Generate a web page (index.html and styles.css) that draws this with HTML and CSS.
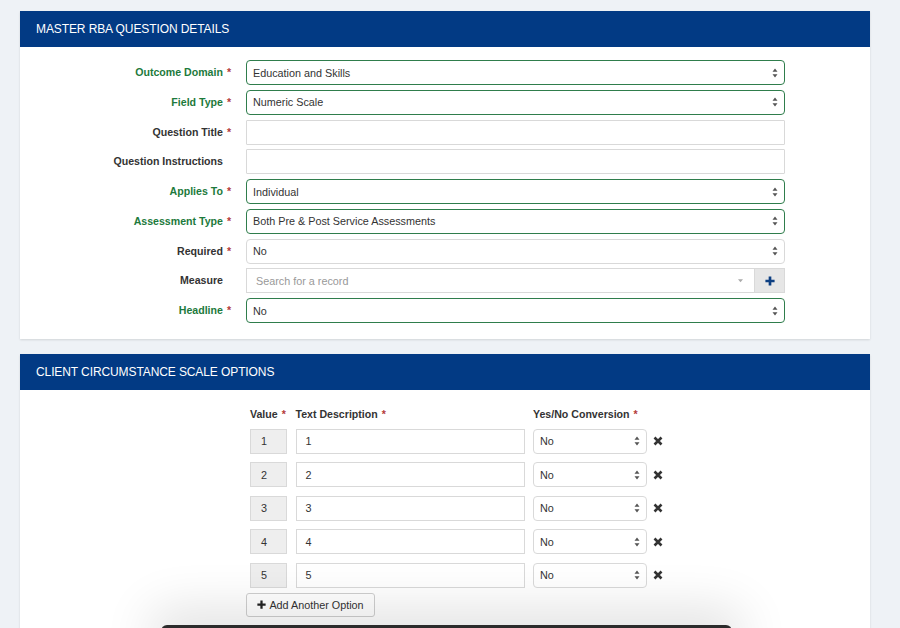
FILE: index.html
```html
<!DOCTYPE html>
<html>
<head>
<meta charset="utf-8">
<link rel="stylesheet" href="styles.css">
</head>
<body>
<div class="page">
  <section class="card">
    <div class="card-head">MASTER RBA QUESTION DETAILS</div>
    <div class="card-body form">
      <div class="lbl ok">Outcome Domain <span class="req">*</span></div>
      <div class="ctl sel green"><span>Education and Skills</span><svg class="arr" viewBox="0 0 6 10"><path d="M3 0.5 L5.5 3.8 H0.5Z M3 9.5 L5.5 6.2 H0.5Z"/></svg></div>

      <div class="lbl ok">Field Type <span class="req">*</span></div>
      <div class="ctl sel green"><span>Numeric Scale</span><svg class="arr" viewBox="0 0 6 10"><path d="M3 0.5 L5.5 3.8 H0.5Z M3 9.5 L5.5 6.2 H0.5Z"/></svg></div>

      <div class="lbl">Question Title <span class="req">*</span></div>
      <div class="ctl txt"></div>

      <div class="lbl">Question Instructions <span class="req hide">*</span></div>
      <div class="ctl txt"></div>

      <div class="lbl ok">Applies To <span class="req">*</span></div>
      <div class="ctl sel green"><span>Individual</span><svg class="arr" viewBox="0 0 6 10"><path d="M3 0.5 L5.5 3.8 H0.5Z M3 9.5 L5.5 6.2 H0.5Z"/></svg></div>

      <div class="lbl ok">Assessment Type <span class="req">*</span></div>
      <div class="ctl sel green"><span>Both Pre &amp; Post Service Assessments</span><svg class="arr" viewBox="0 0 6 10"><path d="M3 0.5 L5.5 3.8 H0.5Z M3 9.5 L5.5 6.2 H0.5Z"/></svg></div>

      <div class="lbl">Required <span class="req">*</span></div>
      <div class="ctl sel"><span>No</span><svg class="arr" viewBox="0 0 6 10"><path d="M3 0.5 L5.5 3.8 H0.5Z M3 9.5 L5.5 6.2 H0.5Z"/></svg></div>

      <div class="lbl">Measure <span class="req hide">*</span></div>
      <div class="measure">
        <div class="search"><span>Search for a record</span><svg class="caret" viewBox="0 0 6 4"><path d="M0 0 H6 L3 3.5Z"/></svg></div>
        <div class="addbtn"><svg viewBox="0 0 12 12"><path d="M4.4 0.5 H7.6 V4.4 H11.5 V7.6 H7.6 V11.5 H4.4 V7.6 H0.5 V4.4 H4.4Z"/></svg></div>
      </div>

      <div class="lbl ok">Headline <span class="req">*</span></div>
      <div class="ctl sel green"><span>No</span><svg class="arr" viewBox="0 0 6 10"><path d="M3 0.5 L5.5 3.8 H0.5Z M3 9.5 L5.5 6.2 H0.5Z"/></svg></div>
    </div>
  </section>

  <section class="card second">
    <div class="card-head">CLIENT CIRCUMSTANCE SCALE OPTIONS</div>
    <div class="card-body options">
      <div class="grid">
        <div class="th">Value <span class="req">*</span></div>
        <div class="th">Text Description <span class="req">*</span></div>
        <div class="th">Yes/No Conversion <span class="req">*</span></div>
        <div></div>

        <div class="val">1</div><div class="desc">1</div>
        <div class="yn"><span>No</span><svg class="arr" viewBox="0 0 6 10"><path d="M3 0.5 L5.5 3.8 H0.5Z M3 9.5 L5.5 6.2 H0.5Z"/></svg></div>
        <svg class="x" viewBox="0 0 10 10"><path d="M1.5 1.5 L8.5 8.5 M8.5 1.5 L1.5 8.5"/></svg>

        <div class="val">2</div><div class="desc">2</div>
        <div class="yn"><span>No</span><svg class="arr" viewBox="0 0 6 10"><path d="M3 0.5 L5.5 3.8 H0.5Z M3 9.5 L5.5 6.2 H0.5Z"/></svg></div>
        <svg class="x" viewBox="0 0 10 10"><path d="M1.5 1.5 L8.5 8.5 M8.5 1.5 L1.5 8.5"/></svg>

        <div class="val">3</div><div class="desc">3</div>
        <div class="yn"><span>No</span><svg class="arr" viewBox="0 0 6 10"><path d="M3 0.5 L5.5 3.8 H0.5Z M3 9.5 L5.5 6.2 H0.5Z"/></svg></div>
        <svg class="x" viewBox="0 0 10 10"><path d="M1.5 1.5 L8.5 8.5 M8.5 1.5 L1.5 8.5"/></svg>

        <div class="val">4</div><div class="desc">4</div>
        <div class="yn"><span>No</span><svg class="arr" viewBox="0 0 6 10"><path d="M3 0.5 L5.5 3.8 H0.5Z M3 9.5 L5.5 6.2 H0.5Z"/></svg></div>
        <svg class="x" viewBox="0 0 10 10"><path d="M1.5 1.5 L8.5 8.5 M8.5 1.5 L1.5 8.5"/></svg>

        <div class="val">5</div><div class="desc">5</div>
        <div class="yn"><span>No</span><svg class="arr" viewBox="0 0 6 10"><path d="M3 0.5 L5.5 3.8 H0.5Z M3 9.5 L5.5 6.2 H0.5Z"/></svg></div>
        <svg class="x" viewBox="0 0 10 10"><path d="M1.5 1.5 L8.5 8.5 M8.5 1.5 L1.5 8.5"/></svg>
      </div>
      <button class="add"><svg viewBox="0 0 12 12"><path d="M4.5 0.5 H7.5 V4.5 H11.5 V7.5 H7.5 V11.5 H4.5 V7.5 H0.5 V4.5 H4.5Z"/></svg>Add Another Option</button>
    </div>
  </section>
</div>
<div class="dock"></div>
</body>
</html>
```

FILE: styles.css
```css
html, body {
  margin: 0;
  padding: 0;
  height: 100%;
  overflow: hidden;
}
body {
  background: #eef2f6;
  font-family: "Liberation Sans", Arial, sans-serif;
  color: #333;
}
.page {
  padding: 11px 30px 0 20px;
}
.card {
  background: #fff;
  box-shadow: 0 1px 2px rgba(0,0,0,0.12);
}
.second {
  margin-top: 15px;
}
.card-head {
  background: #023a84;
  color: #fff;
  height: 36px;
  line-height: 36px;
  padding-left: 16px;
  font-size: 12px;
  letter-spacing: -0.1px;
}
.form {
  display: grid;
  grid-template-columns: 211px 539px;
  column-gap: 15px;
  row-gap: 4.75px;
  padding: 13px 0 16px 0;
}
.lbl {
  font-size: 10.6px;
  font-weight: bold;
  text-align: right;
  height: 25px;
  line-height: 25px;
  color: #333;
  white-space: nowrap;
}
.lbl.ok { color: #1d7a3c; }
.req {
  color: #b33a3a;
  font-weight: bold;
  margin-left: 1px;
}
.hide { visibility: hidden; }
.ctl {
  box-sizing: border-box;
  height: 25px;
  border: 1px solid #d9d9d9;
  font-size: 10.8px;
  color: #333;
  display: flex;
  align-items: center;
  padding: 0 6px;
}
.sel {
  border-radius: 4px;
  justify-content: space-between;
}
.txt { border-radius: 1px; }
.green { border-color: #2f7d4c; }
.arr {
  width: 6px;
  height: 10px;
  fill: #555;
  flex: none;
  margin-right: 0;
}
.measure {
  display: flex;
  height: 25px;
}
.search {
  box-sizing: border-box;
  flex: 1;
  border: 1px solid #d9d9d9;
  border-right: none;
  display: flex;
  align-items: center;
  justify-content: space-between;
  padding: 0 0 0 9px;
  font-size: 10.8px;
  color: #999;
}
.caret {
  width: 5px;
  height: 4px;
  fill: #aaa;
  margin-right: 11px;
}
.addbtn {
  box-sizing: border-box;
  width: 31px;
  background: #e6e6e6;
  border: 1px solid #d9d9d9;
  display: flex;
  align-items: center;
  justify-content: center;
}
.addbtn svg {
  width: 10px;
  height: 10px;
  fill: #0d3f82;
}
.options {
  padding: 18px 0 30px 226px;
}
.grid {
  display: grid;
  grid-template-columns: 37px 229px 114px 10px;
  column-gap: 8.5px;
  row-gap: 8.5px;
  align-items: center;
  padding-left: 4px;
}
.th {
  font-size: 10.6px;
  font-weight: bold;
  color: #333;
  white-space: nowrap;
  margin-bottom: 0;
}
.val, .desc, .yn {
  box-sizing: border-box;
  height: 25px;
  border: 1px solid #d9d9d9;
  font-size: 10.8px;
  color: #333;
  display: flex;
  align-items: center;
}
.val {
  background: #eeeeee;
  padding-left: 10px;
}
.desc {
  padding-left: 9px;
}
.yn {
  border-radius: 4px;
  padding: 0 6px;
  justify-content: space-between;
}
.x {
  width: 10px;
  height: 10px;
  stroke: #333;
  stroke-width: 2.6;
  margin-left: -3px;
}
.add {
  margin-top: 5px;
  box-sizing: border-box;
  width: 129px;
  height: 24px;
  background: #fff;
  border: 1px solid #cfcfcf;
  border-radius: 3px;
  font-family: "Liberation Sans", Arial, sans-serif;
  font-size: 10.8px;
  color: #333;
  display: flex;
  align-items: center;
  justify-content: center;
  gap: 3px;
  padding: 0;
}
.add svg {
  width: 9px;
  height: 9px;
  fill: #222;
}
.dock {
  position: fixed;
  left: 161px;
  top: 625px;
  width: 571px;
  height: 30px;
  background: #2c2c2c;
  border-radius: 6px 6px 0 0;
  box-shadow: 0 -6px 50px 10px rgba(0,0,0,0.12);
}
```
